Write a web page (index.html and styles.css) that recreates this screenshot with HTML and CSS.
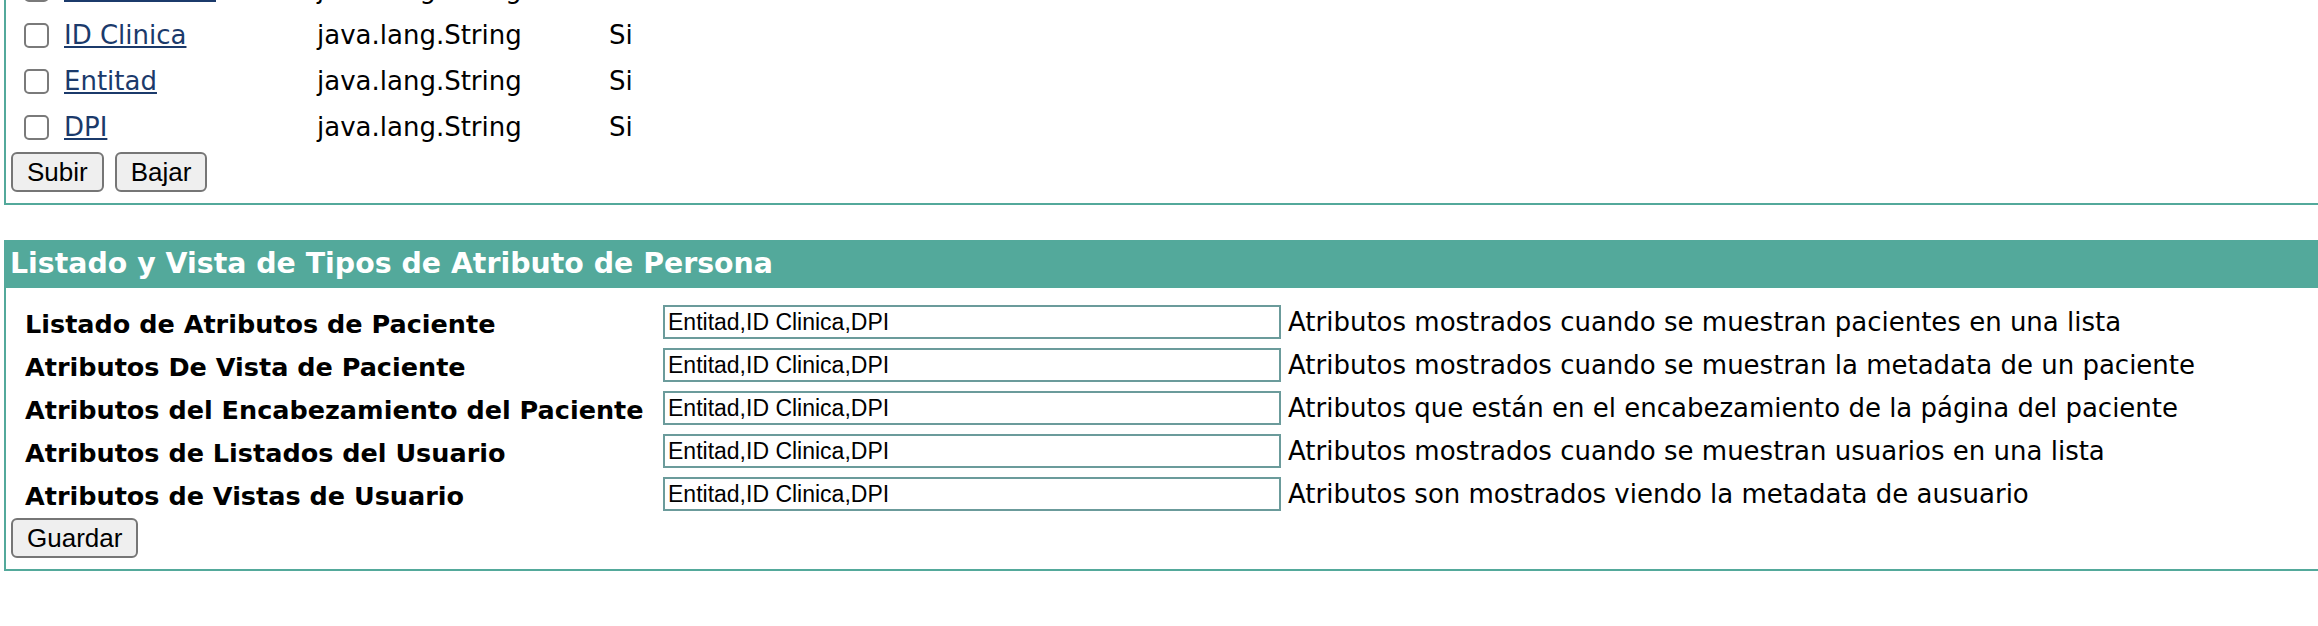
FILE: index.html
```html
<!DOCTYPE html>
<html lang="es">
<head>
    <meta charset="UTF-8" />
    <title>Atributos de Persona</title>
    <link rel="stylesheet" href="styles.css">
</head>
<body>
    <div class="panel panel-list">
        <div class="attr-rows">
            <div class="attr-row">
                <input type="checkbox" />
                <a href="#">Estado Civil</a>
                <span>java.lang.String</span>
                <span>Si</span>
            </div>
            <div class="attr-row">
                <input type="checkbox" />
                <a href="#">ID Clinica</a>
                <span>java.lang.String</span>
                <span>Si</span>
            </div>
            <div class="attr-row">
                <input type="checkbox" />
                <a href="#">Entitad</a>
                <span>java.lang.String</span>
                <span>Si</span>
            </div>
            <div class="attr-row">
                <input type="checkbox" />
                <a href="#">DPI</a>
                <span>java.lang.String</span>
                <span>Si</span>
            </div>
        </div>
        <div class="actions">
            <button>Subir</button>
            <button>Bajar</button>
        </div>
    </div>

    <div class="panel panel-views">
        <div class="panel-header">Listado y Vista de Tipos de Atributo de Persona</div>
        <div class="view-grid">
            <label>Listado de Atributos de Paciente</label>
            <input type="text" value="Entitad,ID Clinica,DPI" />
            <span class="hint">Atributos mostrados cuando se muestran pacientes en una lista</span>

            <label>Atributos De Vista de Paciente</label>
            <input type="text" value="Entitad,ID Clinica,DPI" />
            <span class="hint">Atributos mostrados cuando se muestran la metadata de un paciente</span>

            <label>Atributos del Encabezamiento del Paciente</label>
            <input type="text" value="Entitad,ID Clinica,DPI" />
            <span class="hint">Atributos que están en el encabezamiento de la página del paciente</span>

            <label>Atributos de Listados del Usuario</label>
            <input type="text" value="Entitad,ID Clinica,DPI" />
            <span class="hint">Atributos mostrados cuando se muestran usuarios en una lista</span>

            <label>Atributos de Vistas de Usuario</label>
            <input type="text" value="Entitad,ID Clinica,DPI" />
            <span class="hint">Atributos son mostrados viendo la metadata de ausuario</span>
        </div>
        <div class="actions">
            <button>Guardar</button>
        </div>
    </div>
</body>
</html>
```

FILE: styles.css
```css
body {
    margin: 0 0 0 4px;
    overflow: hidden;
    background: #ffffff;
    font-family: "DejaVu Sans", Verdana, sans-serif;
    font-size: 26px;
    color: #000;
}

.panel {
    width: 2400px;
    border: 2px solid #53a99b;
    box-sizing: border-box;
    padding: 0 0 11px 5px;
}

.panel-list {
    margin-top: -36px;
}

.panel-views {
    margin-top: 35px;
    border-top: none;
    padding-left: 0;
}

/* attribute rows */
.attr-rows {
    padding-left: 13px;
}

.attr-row {
    display: grid;
    grid-template-columns: 40px 253px 292px auto;
    align-items: center;
    height: 46px;
}

.attr-row input[type="checkbox"] {
    appearance: none;
    -webkit-appearance: none;
    width: 25px;
    height: 25px;
    margin: 0;
    border: 2px solid #7a7a7a;
    border-radius: 5px;
    background: #fff;
    box-sizing: border-box;
}

.attr-row a {
    color: #1b3a6b;
    text-decoration: underline;
    text-underline-offset: 2px;
}

.actions {
    display: flex;
    gap: 11px;
    margin-top: 2px;
}

.panel-views .actions {
    margin-top: 7px;
    padding-left: 5px;
}

button {
    font-family: "Liberation Sans", Arial, sans-serif;
    font-size: 26px;
    height: 40px;
    padding: 0 14px;
    background: #efefef;
    border: 2px solid #767676;
    border-radius: 6px;
    color: #000;
}

/* header */
.panel-header {
    background: #53a99b;
    color: #fff;
    font-weight: bold;
    font-size: 28.4px;
    line-height: 48px;
    height: 48px;
    margin-left: -2px;
    padding-left: 6px;
}

.view-grid {
    display: grid;
    grid-template-columns: 638px 625px auto;
    grid-auto-rows: 34px;
    row-gap: 9px;
    align-items: center;
    margin-top: 17px;
    padding-left: 19px;
}

.view-grid label {
    font-weight: bold;
    font-size: 25.5px;
    padding-top: 3px;
    white-space: nowrap;
}

.view-grid input[type="text"] {
    width: 618px;
    height: 34px;
    box-sizing: border-box;
    border: 2px solid #6b9b9b;
    padding: 0 3px;
    margin: 0;
    font-family: "Liberation Sans", Arial, sans-serif;
    font-size: 23px;
    color: #000;
}

.hint {
    white-space: nowrap;
}
```
